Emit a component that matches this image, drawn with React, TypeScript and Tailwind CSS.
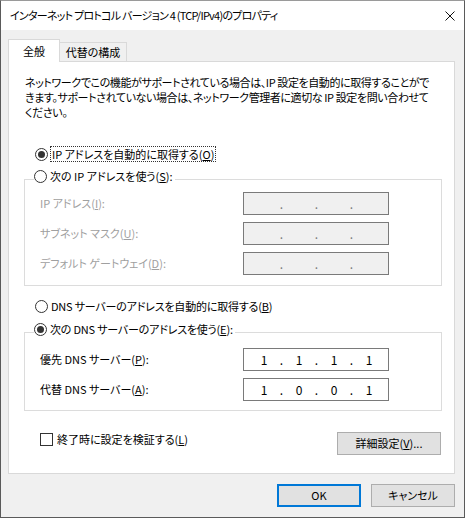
import React from "react";

const font = "font-['Noto_Sans_CJK_JP','Noto_Sans',sans-serif] [font-feature-settings:'palt']";

function Radio({ checked }: { checked?: boolean }) {
  return (
    <span className="w-[13px] h-[13px] shrink-0 rounded-full border border-[#333333] bg-white flex items-center justify-center">
      {checked && <span className="w-[7px] h-[7px] rounded-full bg-[#333333]" />}
    </span>
  );
}

function IpBox({ values, disabled }: { values?: string[]; disabled?: boolean }) {
  const v = values ?? ["", "", "", ""];
  return (
    <div
      className={
        "w-[146px] h-[23px] border border-[#7a7a7a] flex items-center pl-[6px] text-[12px] " +
        (disabled ? "bg-[#f0f0f0] text-[#7a7a7a]" : "bg-white text-black")
      }
    >
      {v.map((s, i) => (
        <React.Fragment key={i}>
          <span className="w-[28px] text-center leading-none">{s}</span>
          {i < 3 && <span className="w-[7px] text-center leading-none">.</span>}
        </React.Fragment>
      ))}
    </div>
  );
}

export default function App() {
  return (
    <div className={"w-[465px] h-[518px] bg-[#f0f0f0] border border-[#5a5a5a] border-t-[#9a9a9a] flex flex-col text-[11px] text-black " + font}>
      {/* Title bar */}
      <div className="h-[29px] bg-white flex items-center justify-between pl-[9px] pr-[9px] shrink-0">
        <span className="text-[11px] tracking-[-0.75px] whitespace-nowrap">インターネット プロトコル バージョン 4 (TCP/IPv4)のプロパティ</span>
        <svg width="10" height="10" viewBox="0 0 10 10" className="shrink-0">
          <path d="M0.5 0.5 L9.5 9.5 M9.5 0.5 L0.5 9.5" stroke="#111" strokeWidth="1" />
        </svg>
      </div>

      {/* Body */}
      <div className="flex flex-col pl-[7px] pt-[9px]">
        {/* Tabs */}
        <div className="h-[22px] flex items-start relative z-10">
          <div className="w-[52px] h-[23px] bg-white border-t border-l border-r border-[#d9d9d9] flex items-center justify-center">
            全般
          </div>
          <div className="mt-[3px] w-[67px] h-[19px] bg-[#f0f0f0] border-t border-r border-[#d9d9d9] flex items-center justify-center">
            代替の構成
          </div>
        </div>

        {/* Panel */}
        <div className="w-[447px] h-[413px] bg-white border border-[#d9d9d9] flex flex-col">
          <div className="mt-[13px] pl-[16px] leading-[15px] whitespace-nowrap tracking-[-0.4px]">
            <div>ネットワークでこの機能がサポートされている場合は、IP 設定を自動的に取得することがで</div>
            <div>きます。サポートされていない場合は、ネットワーク管理者に適切な IP 設定を問い合わせて</div>
            <div>ください。</div>
          </div>

          <div className="mt-[26px] pl-[26px] h-[16px] flex items-center">
            <Radio checked />
            <span className="ml-[2px] px-[1px] border border-dotted border-[#333] leading-[14px] whitespace-nowrap">
              IP アドレスを自動的に取得する(<u>O</u>)
            </span>
          </div>

          {/* IP group */}
          <div className="mt-[17px] ml-[15px] w-[418px] h-[107px] border border-[#dcdcdc] relative flex flex-col pt-[12px] gap-[7px]">
            <div className="absolute left-[9px] top-[-12px] h-[16px] bg-white flex items-center pr-[2px]">
              <Radio />
              <span className="ml-[3px] whitespace-nowrap">次の IP アドレスを使う(<u>S</u>):</span>
            </div>
            {[
              ["IP アドレス(", "I", "):"],
              ["サブネット マスク(", "U", "):"],
              ["デフォルト ゲートウェイ(", "D", "):"],
            ].map(([a, b, c]) => (
              <div key={b} className="flex items-center pl-[15px] h-[23px]">
                <span className="w-[203px] text-[#a0a0a0] whitespace-nowrap">
                  {a}
                  <u>{b}</u>
                  {c}
                </span>
                <IpBox disabled />
              </div>
            ))}
          </div>

          <div className="mt-[12px] pl-[26px] h-[16px] flex items-center">
            <Radio />
            <span className="ml-[3px] whitespace-nowrap tracking-[-0.2px]">DNS サーバーのアドレスを自動的に取得する(<u>B</u>)</span>
          </div>

          {/* DNS group */}
          <div className="mt-[18px] ml-[15px] w-[418px] h-[79px] border border-[#dcdcdc] relative flex flex-col pt-[15px] gap-[7px]">
            <div className="absolute left-[9px] top-[-12px] h-[16px] bg-white flex items-center pr-[2px]">
              <Radio checked />
              <span className="ml-[3px] whitespace-nowrap tracking-[-0.2px]">次の DNS サーバーのアドレスを使う(<u>E</u>):</span>
            </div>
            <div className="flex items-center pl-[15px] h-[23px]">
              <span className="w-[203px] whitespace-nowrap">
                優先 DNS サーバー(<u>P</u>):
              </span>
              <IpBox values={["1", "1", "1", "1"]} />
            </div>
            <div className="flex items-center pl-[15px] h-[23px]">
              <span className="w-[203px] whitespace-nowrap">
                代替 DNS サーバー(<u>A</u>):
              </span>
              <IpBox values={["1", "0", "0", "1"]} />
            </div>
          </div>

          {/* checkbox + advanced */}
          <div className="mt-[20px] flex items-start pl-[31px] pr-[13px]">
            <div className="h-[16px] flex items-center">
              <span className="w-[13px] h-[13px] border border-[#333333] bg-white shrink-0" />
              <span className="ml-[4px] whitespace-nowrap">終了時に設定を検証する(<u>L</u>)</span>
            </div>
            <button className="ml-auto mt-[1px] w-[104px] h-[23px] bg-[#e1e1e1] border border-[#adadad] flex items-center justify-center whitespace-nowrap">
              詳細設定(<u>V</u>)...
            </button>
          </div>
        </div>

        {/* Bottom buttons */}
        <div className="mt-[10px] flex justify-end gap-[10px] pr-[9px]">
          <button className="w-[84px] h-[23px] bg-[#e1e1e1] border-2 border-[#0078d7] flex items-center justify-center">
            OK
          </button>
          <button className="w-[84px] h-[23px] bg-[#e1e1e1] border border-[#adadad] flex items-center justify-center">
            キャンセル
          </button>
        </div>
      </div>
    </div>
  );
}
